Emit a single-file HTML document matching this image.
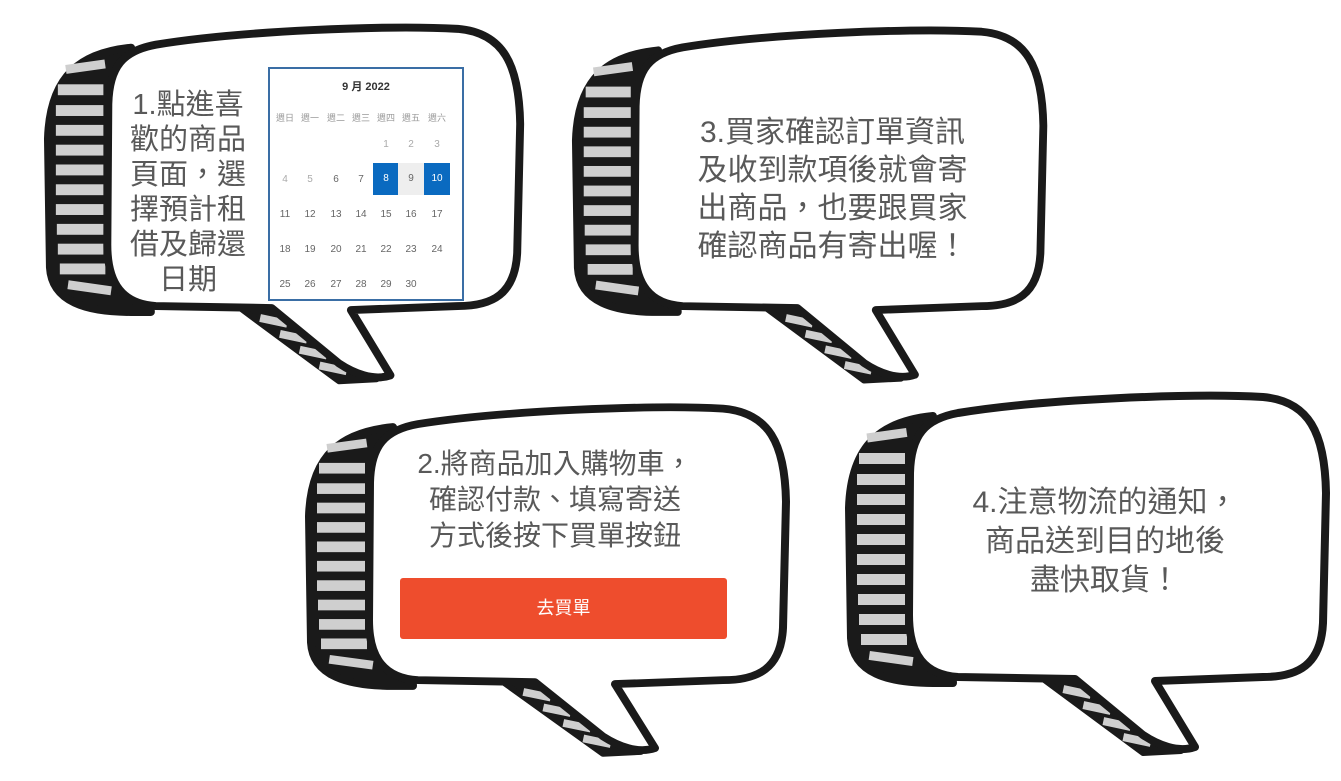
<!DOCTYPE html>
<html><head><meta charset="utf-8"><style>
html,body{margin:0;padding:0;background:#fff;width:1341px;height:781px;overflow:hidden;font-family:"Liberation Sans","Noto Sans CJK TC",sans-serif}
svg{position:absolute;left:0;top:0}
.t{position:absolute;color:#595959;text-align:center;white-space:nowrap}
.cal{position:absolute;left:268px;top:67px;width:192px;height:230px;border:2px solid #3a6ea5;background:#fff;font-family:"Liberation Sans","Noto Sans CJK TC",sans-serif}
.cal div{position:absolute;font-size:10px;color:#666;text-align:center;width:26px}
</style></head><body>
<svg width="1341" height="781" viewBox="0 0 1341 781">
<defs>
<g id="bub">
 <path d="M90,33 C40,38 8,60 6,125 L8,255 C10,290 45,300 90,300 L110,300 Z" fill="#1a1a1a" stroke="#1a1a1a" stroke-width="8" stroke-linejoin="round"/>
 <g fill="#cfcfcf">
  <rect x="24" y="48" width="40" height="9" transform="rotate(-8 42 53)"/>
  <rect x="16" y="70" width="46" height="11"/>
  <rect x="14" y="91" width="48" height="11"/>
  <rect x="14" y="111" width="48" height="11"/>
  <rect x="14" y="131" width="48" height="11"/>
  <rect x="14" y="151" width="48" height="11"/>
  <rect x="14" y="171" width="48" height="11"/>
  <rect x="14" y="191" width="48" height="11"/>
  <rect x="15" y="211" width="47" height="11"/>
  <rect x="16" y="231" width="46" height="11"/>
  <rect x="18" y="251" width="46" height="11"/>
  <rect x="26" y="271" width="44" height="9" transform="rotate(8 48 276)"/>
 </g>
 <path d="M200,296 L232,296 L338,368 L300,370 Z" fill="#1a1a1a" stroke="#1a1a1a" stroke-width="6" stroke-linejoin="round"/>
 <g fill="#cfcfcf">
  <rect x="220" y="305" width="28" height="8" transform="rotate(12 234 309)"/>
  <rect x="240" y="321" width="28" height="8" transform="rotate(12 254 325)"/>
  <rect x="260" y="337" width="28" height="8" transform="rotate(12 274 341)"/>
  <rect x="280" y="353" width="28" height="8" transform="rotate(12 294 357)"/>
 </g>
 <path d="M115,30 C200,16 350,10 420,14 C466,18 482,50 483,110 L480,240 C478,282 455,294 420,294 L312,298 L352,364 C335,370 315,362 300,352 L232,296 L115,294 C82,292 66,272 66,232 L67,90 C68,52 82,36 115,30 Z" fill="#fff" stroke="#1a1a1a" stroke-width="8" stroke-linejoin="round"/>
</g>
</defs>
<use href="#bub" transform="translate(42,15) scale(0.99,0.99)"/>
<use href="#bub" transform="translate(570,18) scale(0.98,0.98)"/>
<use href="#bub" transform="translate(303,395) scale(1,0.97)"/>
<use href="#bub" transform="translate(843,383) scale(1,1)"/>
</svg>

<div class="t" style="left:108px;top:88px;width:160px;font-size:29px;line-height:35px">1.點進喜<br>歡的商品<br>頁面，選<br>擇預計租<br>借及歸還<br>日期</div>

<div class="cal">
 <div style="left:0;width:192px;top:9px;font-weight:bold;color:#333;font-size:11px">9 月 2022</div>
 <div style="left:2px;top:42px;font-size:9px;color:#999">週日</div>
 <div style="left:27px;top:42px;font-size:9px;color:#999">週一</div>
 <div style="left:53px;top:42px;font-size:9px;color:#999">週二</div>
 <div style="left:78px;top:42px;font-size:9px;color:#999">週三</div>
 <div style="left:103px;top:42px;font-size:9px;color:#999">週四</div>
 <div style="left:128px;top:42px;font-size:9px;color:#999">週五</div>
 <div style="left:154px;top:42px;font-size:9px;color:#999">週六</div>
 <div style="left:103px;top:70px;color:#aaa">1</div><div style="left:128px;top:70px;color:#aaa">2</div><div style="left:154px;top:70px;color:#aaa">3</div>
 <div style="left:2px;top:105px;color:#aaa">4</div><div style="left:27px;top:105px;color:#aaa">5</div><div style="left:53px;top:105px">6</div><div style="left:78px;top:105px">7</div>
 <div style="left:103px;top:94px;height:32px;line-height:32px;background:#0a6ac0;color:#fff">8</div>
 <div style="left:128px;top:94px;height:32px;line-height:32px;background:#eee">9</div>
 <div style="left:154px;top:94px;height:32px;line-height:32px;background:#0a6ac0;color:#fff">10</div>
 <div style="left:2px;top:140px">11</div><div style="left:27px;top:140px">12</div><div style="left:53px;top:140px">13</div><div style="left:78px;top:140px">14</div><div style="left:103px;top:140px">15</div><div style="left:128px;top:140px">16</div><div style="left:154px;top:140px">17</div>
 <div style="left:2px;top:175px">18</div><div style="left:27px;top:175px">19</div><div style="left:53px;top:175px">20</div><div style="left:78px;top:175px">21</div><div style="left:103px;top:175px">22</div><div style="left:128px;top:175px">23</div><div style="left:154px;top:175px">24</div>
 <div style="left:2px;top:210px">25</div><div style="left:27px;top:210px">26</div><div style="left:53px;top:210px">27</div><div style="left:78px;top:210px">28</div><div style="left:103px;top:210px">29</div><div style="left:128px;top:210px">30</div>
</div>

<div class="t" style="left:670px;top:114px;width:325px;font-size:30px;line-height:38px">3.買家確認訂單資訊<br>及收到款項後就會寄<br>出商品，也要跟買家<br>確認商品有寄出喔！</div>

<div class="t" style="left:400px;top:446px;width:310px;font-size:28px;line-height:36px">2.將商品加入購物車，<br>確認付款、填寫寄送<br>方式後按下買單按鈕</div>

<div style="position:absolute;left:400px;top:578px;width:327px;height:61px;background:#ee4d2d;border-radius:3px;color:#fff;font-size:18px;line-height:61px;text-align:center;font-family:'Liberation Sans','Noto Sans CJK TC',sans-serif">去買單</div>

<div class="t" style="left:955px;top:483px;width:300px;font-size:30px;line-height:39px">4.注意物流的通知，<br>商品送到目的地後<br>盡快取貨！</div>
</body></html>
